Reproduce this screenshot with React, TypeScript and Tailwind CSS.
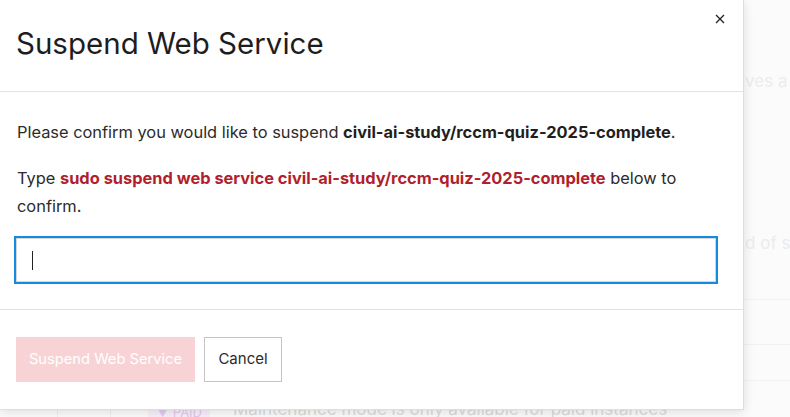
import React from "react";

export default function App() {
  return (
    <div
      className="relative w-[790px] h-[417px] overflow-hidden bg-[#fbfbfb]"
      style={{ fontFamily: "Inter, 'Liberation Sans', sans-serif" }}
    >
      {/* faint background page */}
      <div className="absolute inset-0 text-[#ececec] text-[17px] whitespace-nowrap">
        <div className="absolute left-[745px] top-[69px]">ves a s</div>
        <div className="absolute left-[745px] top-[231px]">d of se</div>
        <div className="absolute left-[743px] right-0 top-[299px] h-px bg-[#f1f1f1]" />
        <div className="absolute left-[743px] right-0 top-[344px] h-px bg-[#f1f1f1]" />
        <div className="absolute left-[743px] right-0 top-[380px] h-px bg-[#f1f1f1]" />
        <div className="absolute left-[57px] top-[409px] h-[10px] w-px bg-[#eee]" />
        <div className="absolute left-[110px] top-[409px] h-[10px] w-px bg-[#eee]" />
        <div className="absolute left-[148px] top-[402px] px-[8px] h-[16px] bg-[#f7effa] text-[#e3c9ee] text-[13px] leading-[20px]">
          ▼ PAID
        </div>
        <div className="absolute left-[233px] top-[397px] text-[#dcdcdc] text-[17px]">
          Maintenance mode is only available for paid instances
        </div>
      </div>

      {/* modal */}
      <div className="absolute left-0 top-0 w-[744px] h-[410px] bg-white border-r border-b border-[#dedede] shadow-[0_2px_10px_rgba(0,0,0,0.12)] flex flex-col">
        <div className="relative h-[92px] border-b border-[#e2e2e2] flex items-center pl-[16px]">
          <h1 className="text-[29.5px] leading-[34px] text-[#1d1d1d] -mt-[6px]">
            Suspend Web Service
          </h1>
          <button className="absolute left-[713px] top-[12px] w-[14px] h-[14px] flex items-center justify-center">
            <svg width="10" height="10" viewBox="0 0 10 10">
              <path d="M1 1 L9 9 M9 1 L1 9" stroke="#222" strokeWidth="1.3" />
            </svg>
          </button>
        </div>

        <div className="px-[17px] pt-[26px] pb-[25px] border-b border-[#e2e2e2] text-[16.4px] text-[#2b2b2b]">
          <p className="leading-[28px]">
            Please confirm you would like to suspend{" "}
            <span className="font-bold text-[#1f1f1f]">civil-ai-study/rccm-quiz-2025-complete</span>.
          </p>
          <p className="leading-[28px] mt-[18px]">
            Type{" "}
            <span className="font-bold text-[#b11f2d]">
              sudo suspend web service civil-ai-study/rccm-quiz-2025-complete
            </span>{" "}
            below to confirm.
          </p>
          <div className="mt-[16px] -ml-[3px] w-[704px] h-[48px] border-2 border-[#1689e1]">
            <div className="w-full h-full border border-[#d4d4d4] flex items-center pl-[15px]">
              <span className="w-px h-[19px] bg-[#222]" />
            </div>
          </div>
        </div>

        <div className="flex gap-[9px] px-[16px] pt-[27px]">
          <button className="h-[45px] w-[179px] bg-[#f8d3d5] text-white text-[14.7px]">
            Suspend Web Service
          </button>
          <button className="h-[45px] w-[78px] border border-[#c4c4c4] text-[#2b2b2b] text-[15px] bg-white">
            Cancel
          </button>
        </div>
      </div>
    </div>
  );
}
